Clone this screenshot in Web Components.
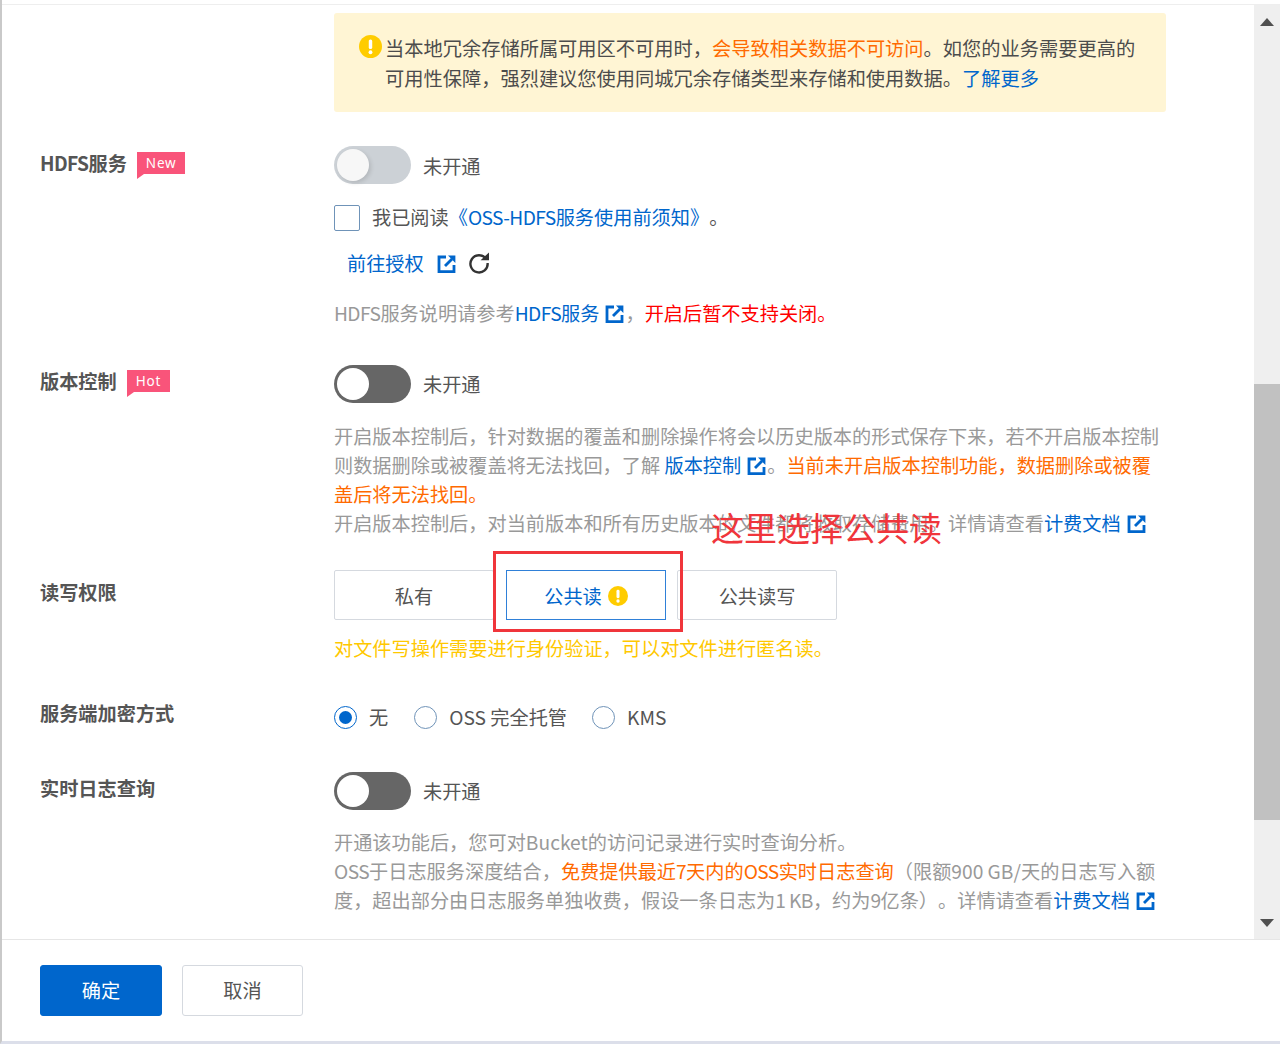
<!DOCTYPE html>
<html lang="zh"><head><meta charset="utf-8">
<style>
html,body{margin:0;padding:0;height:1044px;overflow:hidden;background:#fff}
body{font:19.2px/29px "Noto Sans CJK SC","Noto Sans",sans-serif;color:#555;text-spacing-trim:space-all}
.la{letter-spacing:-.6px}
</style></head><body>
<template id="t-ext"><style>:host{display:inline-block;width:20px;height:20px;vertical-align:-3px;margin-left:6px}svg{display:block}</style>
<svg width="20" height="20" viewBox="0 0 20 20" fill="none" stroke="#06c" stroke-width="2.8"><path d="M9 3H2V17.6H17V11"/><path d="M8 12 15 5"/><path d="M11 1.6h7.4V9Z" stroke="none" fill="#06c"/></svg></template>
<template id="t-warn"><style>:host{display:inline-block;width:var(--s,20px);height:var(--s,20px)}svg{display:block;width:100%;height:100%}</style>
<svg viewBox="0 0 24 24"><circle cx="12" cy="12" r="12" fill="#fc0"/><rect x="10.2" y="4.6" width="3.6" height="10" rx="1.6" fill="#fff"/><circle cx="12" cy="18" r="2" fill="#fff"/></svg></template>
<template id="t-toggle"><style>
:host{display:flex;align-items:center;gap:12px;height:39px}
.t{width:77px;height:38px;border-radius:19px;background:#666;position:relative;box-sizing:border-box}
:host([disabled]) .t{background:#ccd1d6;margin-top:-1px}
.k{position:absolute;left:3px;top:3px;width:32px;height:32px;border-radius:50%;background:#fff}
:host([disabled]) .k{background:#f7f7f7;box-shadow:2px 2px 4px rgba(0,0,0,.12)}
span{position:relative;top:1px}
</style><div class="t"><div class="k"></div></div><span><slot></slot></span></template>
<template id="t-row"><style>
:host{display:grid;grid-template-columns:294px 832px;padding-left:38px}
.l{font-weight:700;color:#555;display:flex;align-items:flex-start;gap:10px;height:29px}
</style><div class="l"><slot name="label"></slot></div><div><slot></slot></div></template>
<template id="t-tag"><style>
:host{display:inline-block;position:relative;background:#f9547a;color:#fff;font:400 13.5px/22px "Noto Sans",sans-serif;letter-spacing:.8px;padding:0 9px;height:22px}
:host::after{content:"";position:absolute;left:0;top:22px;border-style:solid;border-width:5px 7px 0 0;border-color:#f9547a transparent transparent transparent}
</style><slot></slot></template>
<template id="t-seg"><style>
:host{display:flex;align-items:center;justify-content:center;gap:6px;width:160px;height:50px;box-sizing:border-box;border:1.5px solid #d5d9df;border-radius:2px;color:#555;line-height:31px;padding-top:2px}
:host([active]){border-color:#2f80d8;color:#06c;border-radius:0}
</style><slot></slot></template>
<template id="t-radio"><style>
:host{display:inline-flex;align-items:center;gap:12px;height:29px}
.c{width:23px;height:23px;border-radius:50%;border:1.3px solid #6f93b8;box-sizing:border-box;display:flex;align-items:center;justify-content:center}
.c i{width:13px;height:13px;border-radius:50%;background:#06c;display:none}
:host([on]) .c i{display:block}:host([on]) .c{border-color:#06c}
</style><div class="c"><i></i></div><slot></slot></template>
<template id="t-btn"><style>
:host{display:flex;align-items:center;justify-content:center;width:122px;height:51px;box-sizing:border-box;border:1.5px solid #d5d9df;border-radius:3px;color:#555;background:#fff}
:host([primary]){background:#06c;border-color:#06c;color:#fff}
</style><slot></slot></template>
<template id="t-scroll"><style>
:host{display:flex;flex-direction:column;width:26px;background:#efefef;flex:none;align-items:center}
.u{width:0;height:0;border:7.5px solid transparent;border-top:0;border-bottom:8px solid #505050;margin-top:13px}
.d{width:0;height:0;border:7.5px solid transparent;border-bottom:0;border-top:8px solid #505050;margin-top:auto;margin-bottom:12px}
.th{width:100%;height:436px;background:#c1c1c1;margin-top:358px}
</style><div class="u"></div><div class="th"></div><div class="d"></div></template>
<template id="t-app"><style>
:host{display:flex;flex-direction:column;height:1044px;box-sizing:border-box;border-left:2px solid #c9c9c9;border-bottom:3px solid #dcdfea;position:relative}
.top{display:flex;height:934px;margin-top:4px;border-top:1px solid #eee;flex:none;box-sizing:content-box}
.main{flex:1;overflow:hidden}
.foot{border-top:1px solid #e6e6e6;display:flex;gap:20px;padding:25px 0 0 38px}
</style><div class="top"><div class="main"><slot></slot></div><oss-scroll></oss-scroll></div><div class="foot"><slot name="foot"></slot></div><slot name="over"></slot></template>
<template id="t-over"><style>
:host{position:absolute;left:0;top:0;width:0;height:0}
.r{position:absolute;left:491px;top:551px;width:190px;height:81px;box-sizing:border-box;border:3px solid #f0353b}
.t{position:absolute;left:709px;top:503px;white-space:nowrap;font:33px/48px "Noto Sans CJK SC",sans-serif;color:#f0353b}
</style><div class="r"></div><div class="t">这里选择公共读</div></template>
<template id="t-notice"><style>
:host{display:flex;background:#fff5d4;border-radius:3px;height:99px;width:832px;box-sizing:border-box;padding:21px 0 0 25px;gap:3px;color:#4c4c4c;margin:8px 0 0 332px;font-size:19.24px;line-height:29.5px}
oss-warn{--s:23px;margin-top:1px;flex:none}
</style><oss-warn></oss-warn><div><slot></slot></div></template>

<oss-app>
<oss-notice>当本地冗余存储所属可用区不可用时，<span style="color:#ff6a00">会导致相关数据不可访问</span>。如您的业务需要更高的<br>可用性保障，强烈建议您使用同城冗余存储类型来存储和使用数据。<a style="color:#06c">了解更多</a></oss-notice>

<oss-row style="margin-top:34px">
<span slot="label" style="margin-top:3px"><span class="la">HDFS</span>服务</span><oss-tag slot="label" style="margin-top:6px">New</oss-tag>
<oss-toggle disabled>未开通</oss-toggle>
<div style="display:flex;align-items:center;gap:12px;margin-top:18px;height:29px"><span style="width:26px;height:26px;box-sizing:border-box;border:1.3px solid #6f93b8;border-radius:2px;flex:none"></span><span>我已阅读<span style="color:#06c">《<span class="la">OSS-HDFS</span>服务使用前须知》</span>。</span></div>
<div style="display:flex;align-items:center;margin-top:17px;padding-left:13px;height:29px"><span style="color:#06c">前往授权</span><oss-ext style="margin-left:13px"></oss-ext><svg width="22" height="22" viewBox="0 0 22 22" fill="none" stroke="#333" stroke-width="2.4" style="margin:-2px 0 0 11px"><path d="M18 6.8A8.6 8.6 0 1 0 19.6 11"/><path d="M12.6 8.2H21V0.4" stroke="none" fill="#333"/></svg></div>
<div style="color:#999;margin-top:21px"><span class="la">HDFS</span>服务说明请参考<span style="color:#06c"><span class="la">HDFS</span>服务</span><oss-ext></oss-ext>，<span style="color:#f00">开启后暂不支持关闭。</span></div>
</oss-row>

<oss-row style="margin-top:36px">
<span slot="label" style="margin-top:3px">版本控制</span><oss-tag slot="label" style="margin-top:6px">Hot</oss-tag>
<oss-toggle>未开通</oss-toggle>
<div style="color:#999;margin-top:19px">开启版本控制后，针对数据的覆盖和删除操作将会以历史版本的形式保存下来，若不开启版本控制<br>则数据删除或被覆盖将无法找回，了解 <span style="color:#06c">版本控制</span><oss-ext></oss-ext>。<span style="color:#ff6a00">当前未开启版本控制功能，数据删除或被覆<br>盖后将无法找回。</span><br>开启版本控制后，对当前版本和所有历史版本的文件都将收取存储费用。详情请查看<span style="color:#06c">计费文档</span><oss-ext></oss-ext></div>
</oss-row>

<oss-row style="margin-top:32px">
<span slot="label" style="margin-top:8px">读写权限</span>
<div style="display:flex;gap:12px"><oss-seg>私有</oss-seg><oss-seg active>公共读<oss-warn style="--s:20px"></oss-warn></oss-seg><oss-seg style="margin-left:-1px">公共读写</oss-seg></div>
<div style="color:#ffc800;margin-top:14px">对文件写操作需要进行身份验证，可以对文件进行匿名读。</div>
</oss-row>

<oss-row style="margin-top:40px">
<span slot="label" style="margin-top:-4px">服务端加密方式</span>
<div style="display:flex;gap:26px"><oss-radio on>无</oss-radio><oss-radio>OSS 完全托管</oss-radio><oss-radio style="margin-left:-1px">KMS</oss-radio></div>
</oss-row>

<oss-row style="margin-top:39px">
<span slot="label" style="margin-top:3px">实时日志查询</span>
<oss-toggle>未开通</oss-toggle>
<div style="color:#999;margin-top:18px">开通该功能后，您可对Bucket的访问记录进行实时查询分析。<br><span class="la">OSS</span>于日志服务深度结合，<span style="color:#ff6a00">免费提供最近<span class="la">7</span>天内的<span class="la">OSS</span>实时日志查询</span>（限额900 GB/天的日志写入额<br>度，超出部分由日志服务单独收费，假设一条日志为<span class="la">1 KB</span>，约为<span class="la">9</span>亿条）。详情请查看<span style="color:#06c">计费文档</span><oss-ext></oss-ext></div>
</oss-row>

<oss-btn slot="foot" primary>确定</oss-btn>
<oss-btn slot="foot" style="width:121px">取消</oss-btn>
<oss-over slot="over"></oss-over>
</oss-app>
<script>
const map={app:'t-app',notice:'t-notice',row:'t-row',tag:'t-tag',toggle:'t-toggle',seg:'t-seg',radio:'t-radio',btn:'t-btn',scroll:'t-scroll',ext:'t-ext',warn:'t-warn',over:'t-over'};
for(const [n,id] of Object.entries(map)){
  customElements.define('oss-'+n,class extends HTMLElement{constructor(){super();this.attachShadow({mode:'open'}).appendChild(document.getElementById(id).content.cloneNode(true));}});
}
</script>
</body></html>
